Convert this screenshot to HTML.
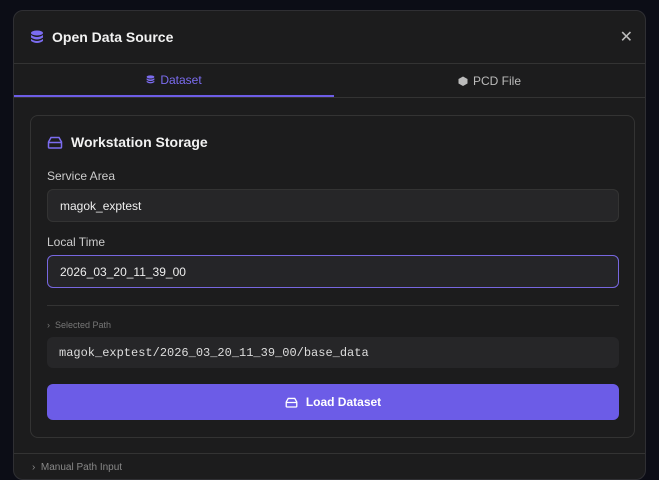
<!DOCTYPE html>
<html><head><style>
*{box-sizing:border-box;margin:0;padding:0}
body{width:659px;height:469px;background:#0c0d16;font-family:"Liberation Sans",sans-serif;position:relative;overflow:hidden;color:#eee}
.modal{position:absolute;left:13px;top:10px;width:633px;height:470px;background:#1c1c1d;border:1px solid #2f2f33;border-radius:10px;overflow:hidden}
.hdr{height:53px;border-bottom:1px solid #333;display:flex;align-items:center;padding-left:16px;font-weight:bold;font-size:14px;color:#f2f2f2}
.x{position:absolute;right:12px;top:16px;color:#bbb;font-size:16px}
.tabs{height:34px;border-bottom:1px solid #333;display:flex;position:relative}
.tab{display:flex;align-items:center;justify-content:center;font-size:12px;color:#bbb;gap:5px}
.tab.a{width:320px;color:#7b6cf0;border-bottom:2px solid #6d5de6}
.tab.b{flex:1}
.card{position:absolute;left:16px;top:104px;width:605px;height:323px;border:1px solid #333;border-radius:8px;padding:0 16px}
.ttl{position:absolute;left:16px;top:18px;font-weight:bold;font-size:14px;display:flex;gap:8px;align-items:center;color:#f2f2f2}
.lbl{position:absolute;left:16px;font-size:12px;color:#ccc}
.inp{position:absolute;left:16px;width:572px;height:33px;background:#262628;border:1px solid #333;border-radius:6px;font-size:12px;padding-left:12px;display:flex;align-items:center;color:#eee}
.btn{position:absolute;left:16px;top:268px;width:572px;height:36px;background:#6c5ce7;border-radius:6px;display:flex;align-items:center;justify-content:center;gap:8px;font-weight:bold;font-size:12px;color:#fff}
</style></head><body>
<div class="modal">
<div class="hdr"><svg width="14" height="14" viewBox="0 0 14 14" style="margin-right:8px"><g fill="#7b6cf0"><ellipse cx="7" cy="3" rx="6" ry="2.5"/><path d="M1 5q6 4 12 0v2.5q-6 4-12 0z"/><path d="M1 9q6 4 12 0v2q-6 4-12 0z"/></g></svg>Open Data Source</div>
<div class="x">✕</div>
<div class="tabs"><div class="tab a"><svg width="9" height="11" viewBox="0 0 14 14"><g fill="#7b6cf0"><ellipse cx="7" cy="3" rx="6" ry="2.5"/><path d="M1 5q6 4 12 0v2.5q-6 4-12 0z"/><path d="M1 9q6 4 12 0v2q-6 4-12 0z"/></g></svg>Dataset</div><div class="tab b"><svg width="10" height="10" viewBox="0 0 10 10"><path d="M5 0.5L9.5 3v4.5L5 10 0.5 7.5V3z" fill="#bbb"/></svg>PCD File</div></div>
<div class="card">
<div class="ttl"><svg width="16" height="13" viewBox="0 0 16 13"><path d="M1.5 6L4 1.5h8L14.5 6v5a1 1 0 0 1-1 1h-11a1 1 0 0 1-1-1zM1.5 6.5h13" fill="none" stroke="#7b6cf0" stroke-width="1.5"/></svg>Workstation Storage</div>
<div class="lbl" style="top:53px">Service Area</div>
<div class="inp" style="top:73px">magok_exptest</div>
<div class="lbl" style="top:119px">Local Time</div>
<div class="inp" style="top:139px;border-color:#7767e0;background:#252528">2026_03_20_11_39_00</div>
<div style="position:absolute;left:16px;top:189px;width:572px;border-top:1px solid #333"></div>
<div class="lbl" style="top:204px;font-size:9px;color:#777">›&nbsp;&nbsp;Selected Path</div>
<div class="inp" style="top:221px;border:none;font-family:'Liberation Mono',monospace;font-size:12px;color:#ddd;height:31px">magok_exptest/2026_03_20_11_39_00/base_data</div>
<div class="btn"><svg width="13" height="11" viewBox="0 0 16 13"><path d="M1.5 6L4 1.5h8L14.5 6v5a1 1 0 0 1-1 1h-11a1 1 0 0 1-1-1zM1.5 6.5h13" fill="none" stroke="#fff" stroke-width="1.6"/></svg>Load Dataset</div>
</div>
<div style="position:absolute;left:0;top:442px;width:633px;border-top:1px solid #333"></div>
<div style="position:absolute;left:18px;top:451px;font-size:10px;color:#888">›&nbsp;&nbsp;Manual Path Input</div>
</div>
</body></html>
